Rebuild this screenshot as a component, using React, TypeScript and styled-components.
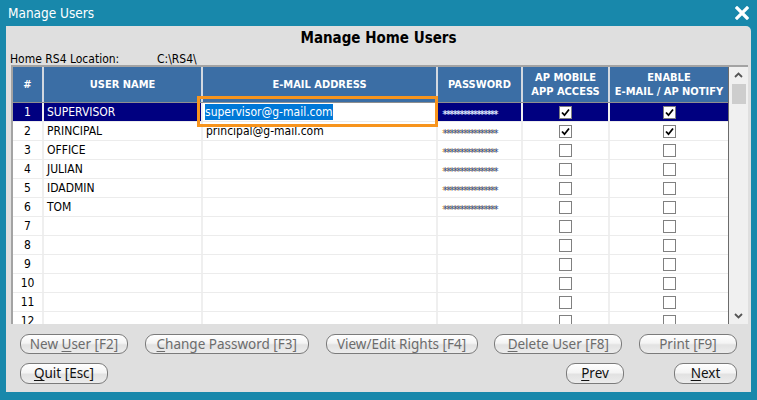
import styled, { createGlobalStyle } from "styled-components";

const FONT = `"DejaVu Sans Condensed", "DejaVu Sans", sans-serif`;
const BUTTON_FONT = `"Noto Sans", "DejaVu Sans", sans-serif`;

const GlobalStyle = createGlobalStyle`
  html, body {
    margin: 0;
    padding: 0;
    background: #1888ab;
  }
  body {
    font-family: ${FONT};
  }
`;

const Window = styled.div`
  width: 757px;
  height: 400px;
  background: #1888ab;
  display: flex;
  flex-direction: column;
  overflow: hidden;
`;

const TitleBar = styled.div`
  height: 25px;
  display: flex;
  align-items: center;
  justify-content: space-between;
  padding: 0 8px 1px 8px;
  color: #fff;
  font-size: 13.5px;
`;

const Panel = styled.div`
  flex: 1;
  margin: 0 6px 8px 6px;
  background: #dfdfdf;
  border-radius: 0 5px 0 0;
  display: flex;
  flex-direction: column;
`;

const Heading = styled.div`
  height: 28px;
  line-height: 24px;
  text-align: center;
  font-weight: bold;
  font-size: 15px;
  color: #000;
`;

const LocationRow = styled.div`
  height: 11px;
  line-height: 11px;
  font-size: 12px;
  padding-left: 4px;
  display: flex;
  color: #000;
`;

const LocationLabel = styled.span`
  width: 147px;
`;

const GridFrame = styled.div`
  position: relative;
  margin-left: 5px;
  width: 735px;
  height: 257px;
  border-top: 2px solid #a3a3a3;
  border-left: 2px solid #a3a3a3;
  background: #fff;
  display: flex;
`;

const TableArea = styled.div`
  width: 715px;
  display: flex;
  flex-direction: column;
  overflow: hidden;
`;

const COLUMNS = "29px 159px 235px 85px 87px 120px";

const HeaderRow = styled.div`
  display: grid;
  grid-template-columns: ${COLUMNS};
  height: 35px;
  flex-shrink: 0;
  background: #3b6ea5;
  border-bottom: 1px solid #8f8f8f;
`;

const HeaderCell = styled.div`
  display: flex;
  align-items: center;
  justify-content: center;
  text-align: center;
  color: #fff;
  font-weight: bold;
  font-size: 11px;
  line-height: 14px;
  & + & {
    border-left: 2px solid #d2d8e0;
  }
`;

const Row = styled.div<{ $selected?: boolean }>`
  display: grid;
  grid-template-columns: ${COLUMNS};
  height: 18px;
  flex-shrink: 0;
  border-bottom: 1px solid #ececec;
  background: ${(p) => (p.$selected ? "#000080" : "#fff")};
  color: ${(p) => (p.$selected ? "#fff" : "#000")};
`;

const Cell = styled.div<{ $center?: boolean; $sel?: boolean }>`
  display: flex;
  align-items: center;
  justify-content: ${(p) => (p.$center ? "center" : "flex-start")};
  padding-left: ${(p) => (p.$center ? "0" : "3px")};
  font-size: 12px;
  white-space: nowrap;
  overflow: hidden;
  & + & {
    border-left: 2px solid ${(p) => (p.$sel ? "#ffffff" : "#efefef")};
  }
`;

const EditCell = styled(Cell)`
  background: #fff;
  padding-left: 2px;
`;

const Highlight = styled.span`
  background: #0078d7;
  color: #fff;
  padding: 1px 0;
`;

const Stars = styled.span<{ $sel?: boolean }>`
  font-size: 10px;
  letter-spacing: -1.1px;
  color: ${(p) => (p.$sel ? "#eef2ff" : "#1f58a8")};
  text-shadow: ${(p) => (p.$sel ? "-1px 0 0 #8aa6e0" : "-1px 0 0 #f2a632")};
  padding: 4px 0 0 2px;
`;

const Box = styled.span`
  width: 11px;
  height: 11px;
  border: 1px solid #808080;
  background: #fff;
  display: flex;
  align-items: center;
  justify-content: center;
`;

const Marker = styled.div`
  position: absolute;
  left: 184px;
  top: 29px;
  width: 235px;
  height: 25px;
  border: 3px solid #f7941d;
  pointer-events: none;
`;

const Scrollbar = styled.div`
  width: 19px;
  border-left: 1px solid #6b6b6b;
  background: #f0f0f0;
  display: flex;
  flex-direction: column;
  align-items: center;
`;

const ScrollArrow = styled.div`
  height: 16px;
  display: flex;
  align-items: center;
  justify-content: center;
  width: 100%;
`;

const Thumb = styled.div`
  width: 14px;
  height: 20px;
  background: #cdcdcd;
  margin-top: 1px;
`;

const Track = styled.div`
  flex: 1;
`;

const ButtonArea = styled.div`
  padding: 10px 14px 0 14px;
  display: flex;
  flex-direction: column;
  gap: 9px;
`;

const ButtonRow = styled.div`
  display: flex;
  justify-content: space-between;
  align-items: center;
`;

const NavGroup = styled.div`
  display: flex;
  gap: 50px;
`;

const Button = styled.button<{ $w: number; $dim?: boolean; $h?: number }>`
  width: ${(p) => p.$w}px;
  height: ${(p) => p.$h ?? 20}px;
  padding: 0 0 1px 0;
  border: 1px solid #7b7b7b;
  border-radius: 9px;
  background: linear-gradient(
    to bottom,
    #ffffff 0%,
    #f4f4f4 45%,
    #e2e2e2 55%,
    #ececec 100%
  );
  font-family: ${BUTTON_FONT};
  font-size: 13.5px;
  font-weight: 400;
  color: ${(p) => (p.$dim ? "#6c6c6c" : "#111")};
  display: flex;
  align-items: center;
  justify-content: center;
`;

const Key = styled.u`
  text-underline-offset: 2px;
`;

const Close = () => (
  <svg width="14" height="14" viewBox="0 0 14 14">
    <path d="M2 2 L12 12 M12 2 L2 12" stroke="#fff" strokeWidth="3.2" strokeLinecap="square" />
  </svg>
);

const Check = () => (
  <svg width="9" height="9" viewBox="0 0 9 9">
    <path d="M1 4.5 L3.5 7.2 L8 1.5" stroke="#000" strokeWidth="1.8" fill="none" />
  </svg>
);

const Chevron = ({ up }: { up?: boolean }) => (
  <svg width="9" height="6" viewBox="0 0 9 6">
    <path
      d={up ? "M1 5 L4.5 1.5 L8 5" : "M1 1 L4.5 4.5 L8 1"}
      stroke="#555"
      strokeWidth="1.8"
      fill="none"
    />
  </svg>
);

interface UserRow {
  name: string;
  email: string;
  password: boolean;
  mobile: boolean;
  notify: boolean;
}

const users: UserRow[] = [
  { name: "SUPERVISOR", email: "supervisor@g-mail.com", password: true, mobile: true, notify: true },
  { name: "PRINCIPAL", email: "principal@g-mail.com", password: true, mobile: true, notify: true },
  { name: "OFFICE", email: "", password: true, mobile: false, notify: false },
  { name: "JULIAN", email: "", password: true, mobile: false, notify: false },
  { name: "IDADMIN", email: "", password: true, mobile: false, notify: false },
  { name: "TOM", email: "", password: true, mobile: false, notify: false },
];

const rows: UserRow[] = Array.from({ length: 12 }, (_, i) =>
  users[i] ?? { name: "", email: "", password: false, mobile: false, notify: false }
);

export default function App() {
  return (
    <Window>
      <GlobalStyle />
      <TitleBar>
        <span>Manage Users</span>
        <Close />
      </TitleBar>
      <Panel>
        <Heading>Manage Home Users</Heading>
        <LocationRow>
          <LocationLabel>Home RS4 Location:</LocationLabel>
          <span>C:\RS4\</span>
        </LocationRow>
        <GridFrame>
          <TableArea>
            <HeaderRow>
              <HeaderCell>#</HeaderCell>
              <HeaderCell>USER NAME</HeaderCell>
              <HeaderCell>E-MAIL ADDRESS</HeaderCell>
              <HeaderCell>PASSWORD</HeaderCell>
              <HeaderCell>
                AP MOBILE
                <br />
                APP ACCESS
              </HeaderCell>
              <HeaderCell>
                ENABLE
                <br />
                E-MAIL / AP NOTIFY
              </HeaderCell>
            </HeaderRow>
            {rows.map((r, i) => {
              const sel = i === 0;
              return (
                <Row key={i} $selected={sel}>
                  <Cell $center $sel={sel}>{i + 1}</Cell>
                  <Cell $sel={sel}>{r.name}</Cell>
                  {sel ? (
                    <EditCell $sel={sel}>
                      <Highlight>{r.email}</Highlight>
                    </EditCell>
                  ) : (
                    <Cell $sel={sel}>{r.email}</Cell>
                  )}
                  <Cell $sel={sel}>
                    {r.password && <Stars $sel={sel}>****************</Stars>}
                  </Cell>
                  <Cell $center $sel={sel}>
                    <Box>{r.mobile && <Check />}</Box>
                  </Cell>
                  <Cell $center $sel={sel}>
                    <Box>{r.notify && <Check />}</Box>
                  </Cell>
                </Row>
              );
            })}
          </TableArea>
          <Scrollbar>
            <ScrollArrow>
              <Chevron up />
            </ScrollArrow>
            <Thumb />
            <Track />
            <ScrollArrow>
              <Chevron />
            </ScrollArrow>
          </Scrollbar>
          <Marker />
        </GridFrame>
        <ButtonArea>
          <ButtonRow>
            <Button $w={108} $dim>
              New&nbsp;<Key>U</Key>ser [F2]
            </Button>
            <Button $w={164} $dim>
              <Key>C</Key>hange Password [F3]
            </Button>
            <Button $w={152} $dim>
              View/Edit Rights [F4]
            </Button>
            <Button $w={128} $dim>
              <Key>D</Key>elete User [F8]
            </Button>
            <Button $w={98} $dim>
              Print [F9]
            </Button>
          </ButtonRow>
          <ButtonRow>
            <Button $w={88} $h={21}>
              <Key>Q</Key>uit [Esc]
            </Button>
            <NavGroup>
              <Button $w={58} $h={21}>
                <Key>P</Key>rev
              </Button>
              <Button $w={63} $h={21}>
                <Key>N</Key>ext
              </Button>
            </NavGroup>
          </ButtonRow>
        </ButtonArea>
      </Panel>
    </Window>
  );
}
